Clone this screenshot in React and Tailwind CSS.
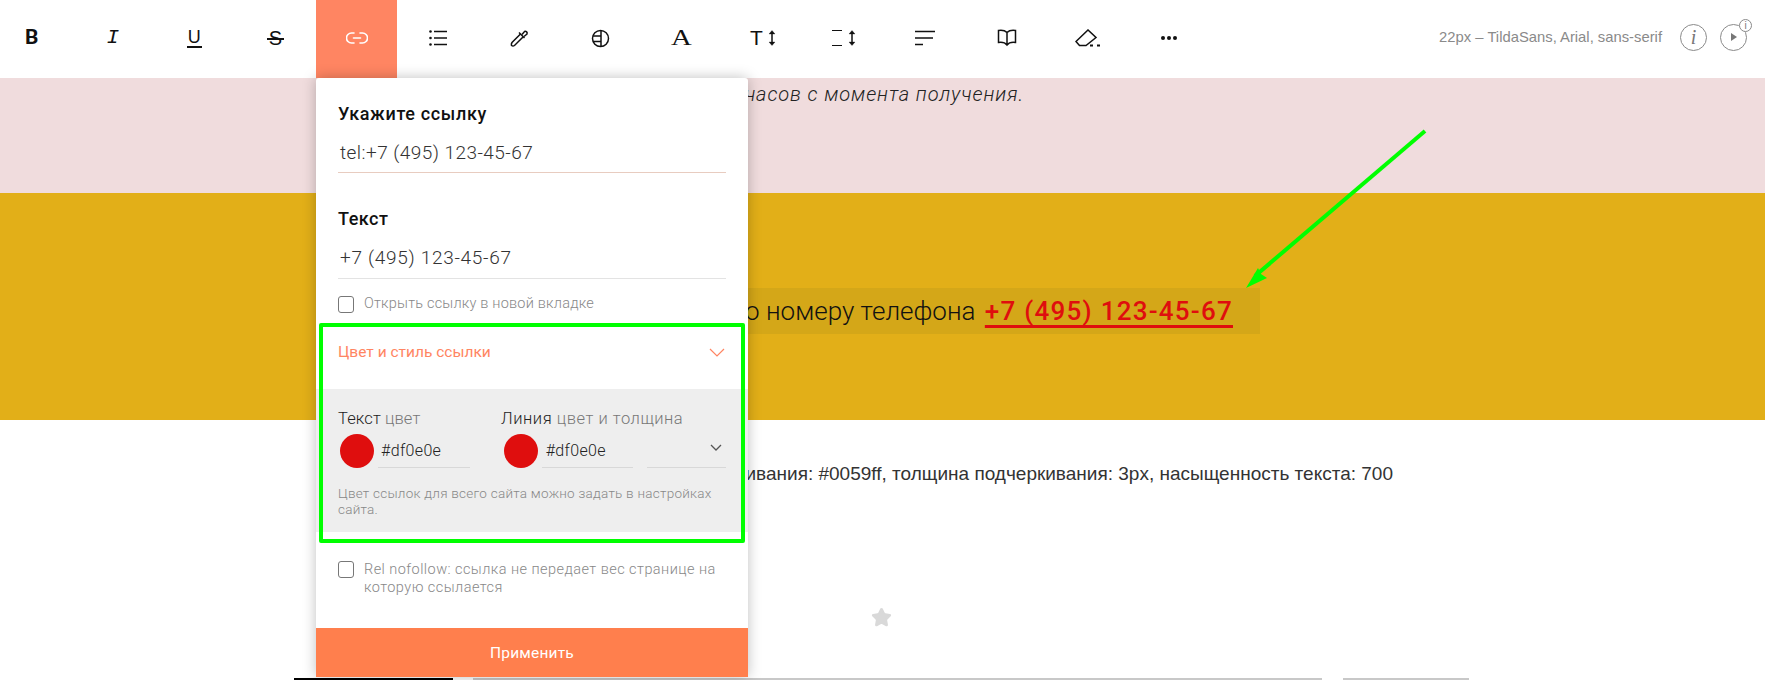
import { Star } from 'lucide-react';

const panelFont = "font-['Roboto','Noto_Sans',sans-serif]";

function LinkIcon() {
  return (
    <svg width="22" height="14" viewBox="0 0 22 14" fill="none" stroke="#fff" strokeWidth="1.6" strokeLinecap="round">
      <path d="M8 2H5.500a5 5 0 0 0 0 10H8" />
      <path d="M14 2h2.500a5 5 0 0 1 0 10H14" />
      <path d="M7.500 7h7" />
    </svg>
  );
}

function ListIcon() {
  return (
    <svg width="18" height="16" viewBox="0 0 18 16" fill="none" stroke="#111" strokeWidth="1.500">
      <path d="M5 1.500h13M5 8h13M5 14.500h13" />
      <g fill="#111" stroke="none">
        <circle cx="1.500" cy="1.500" r="1.300" />
        <circle cx="1.500" cy="8" r="1.300" />
        <circle cx="1.500" cy="14.500" r="1.300" />
      </g>
    </svg>
  );
}

function DropperIcon() {
  return (
    <svg width="19" height="19" viewBox="0 0 19 19" fill="none" stroke="#111" strokeWidth="1.500">
      <path d="M10.500 5 2 13.500Q1 15 1.500 16.500 3 17.500 4.500 16.500L13 8" />
      <path d="M9 3.500 14.500 9" />
      <path d="M12 5.500 14.500 2.500a1.900 1.900 0 0 1 2.500 2.500L14 7.500" />
    </svg>
  );
}

function GlobeIcon() {
  return (
    <svg width="19" height="19" viewBox="0 0 19 19" fill="none" stroke="#111" strokeWidth="1.500">
      <circle cx="9.500" cy="9.500" r="8" />
      <path d="M10 1.500v16M2 7h8M2 12.500h8" />
    </svg>
  );
}

function ArrowV({ h = 16 }) {
  return (
    <svg width="8" height={h} viewBox={`0 0 8 ${h}`} fill="#111" stroke="#111">
      <path d={`M4 2v${h - 4}`} strokeWidth="1.500" />
      <path d="M1 4 4 .5 7 4Z" strokeWidth="0.300" />
      <path d={`M1 ${h - 4} 4 ${h - 0.5} 7 ${h - 4}Z`} strokeWidth="0.300" />
    </svg>
  );
}

function LinesIcon() {
  return (
    <svg width="20" height="16" viewBox="0 0 20 16" fill="none" stroke="#111" strokeWidth="1.500">
      <path d="M0 1.500h20M0 8h18M0 14.500h8" />
    </svg>
  );
}

function BookIcon() {
  return (
    <svg width="20" height="18" viewBox="0 0 20 18" fill="none" stroke="#111" strokeWidth="1.500">
      <path d="M10 3.500C8 1.500 5 1 1.500 1.500v12c3.500-.5 6.500 0 8.500 2.500 2-2.500 5-3 8.500-2.500v-12C15 1 12 1.500 10 3.500Zm0 0V16" />
    </svg>
  );
}

function EraserIcon() {
  return (
    <svg width="26" height="18" viewBox="0 0 26 18" fill="none" stroke="#111" strokeWidth="1.500">
      <path d="M1 12.500 13 1l8 7.500L11 16.500H4.500Z" />
      <path d="M15 16.500h3M22 16.500h3" strokeWidth="1.800" />
    </svg>
  );
}

function ToolCell({ active, children }) {
  return (
    <div className={`w-[81.25px] h-[78px] pb-[2px] flex items-center justify-center shrink-0 ${active ? 'bg-[#ff8562]' : ''}`}>
      {children}
    </div>
  );
}

function Toolbar() {
  return (
    <div className="h-[78px] bg-white flex items-center">
      <div className="flex -ml-[9px]">
        <ToolCell><span className="font-['Roboto'] font-bold text-[21px] text-[#111]">B</span></ToolCell>
        <ToolCell><span className="font-['Liberation_Mono'] italic text-[21px] text-[#111]">I</span></ToolCell>
        <ToolCell><span className="font-['Liberation_Sans'] text-[18px] leading-[17px] border-b-2 border-[#111] text-[#111] px-[1px]">U</span></ToolCell>
        <ToolCell>
          <span className="relative font-['Liberation_Sans'] text-[20px] leading-[20px] text-[#111]">
            S
            <span className="absolute -left-[2px] -right-[2px] top-[10px] h-[1.5px] bg-[#111]" />
          </span>
        </ToolCell>
        <ToolCell active><LinkIcon /></ToolCell>
        <ToolCell><ListIcon /></ToolCell>
        <ToolCell><DropperIcon /></ToolCell>
        <ToolCell><GlobeIcon /></ToolCell>
        <ToolCell><span className="font-['Liberation_Serif'] text-[23px] scale-x-125 text-[#111]">A</span></ToolCell>
        <ToolCell>
          <span className="font-['Liberation_Sans'] text-[21px] text-[#111] mr-[5px]">T</span>
          <ArrowV />
        </ToolCell>
        <ToolCell>
          <span className="w-[10px] h-[16px] border-y-[1.5px] border-[#111] mr-[6px]" />
          <ArrowV />
        </ToolCell>
        <ToolCell><LinesIcon /></ToolCell>
        <ToolCell><BookIcon /></ToolCell>
        <ToolCell><EraserIcon /></ToolCell>
        <ToolCell>
          <span className="flex gap-[1.5px]">
            <span className="w-[4.500px] h-[4.500px] rounded-full bg-[#111]" />
            <span className="w-[4.500px] h-[4.500px] rounded-full bg-[#111]" />
            <span className="w-[4.500px] h-[4.500px] rounded-full bg-[#111]" />
          </span>
        </ToolCell>
      </div>
      <div className="ml-auto mr-[18px] pb-[4px] flex items-center">
        <span className="font-['Liberation_Sans'] text-[14.800px] text-[#8a8a8a] mr-[18px]">22px – TildaSans, Arial, sans-serif</span>
        <span className="w-[27px] h-[27px] rounded-full border-[1.5px] border-[#8a8a8a] flex items-center justify-center font-['Liberation_Serif'] italic text-[20px] text-[#777]">i</span>
        <span className="relative ml-[13px] w-[27px] h-[27px] rounded-full border-[1.5px] border-[#8a8a8a] flex items-center justify-center">
          <span className="w-0 h-0 border-y-[4px] border-y-transparent border-l-[6px] border-l-[#777] ml-[1px]" />
          <span className="absolute -top-[6px] -right-[6px] w-[13px] h-[13px] rounded-full border border-[#8a8a8a] bg-white flex items-center justify-center font-['Liberation_Sans'] text-[10px] text-[#777]">i</span>
        </span>
      </div>
    </div>
  );
}

function Checkbox() {
  return <span className="w-[16px] h-[17px] shrink-0 rounded-[3px] border-[1.5px] border-[#777] bg-white" />;
}

function LinkPanel() {
  return (
    <div className={`absolute left-[316px] top-[78px] w-[432px] h-[599px] z-10 bg-white rounded-t-[3px] shadow-[0_0_14px_rgba(0,0,0,0.25)] flex flex-col ${panelFont}`}>
      <div className="px-[22px]">
        <div className="mt-[25px] text-[18px] leading-[22px] font-medium tracking-[0.65px] text-[#111]">Укажите ссылку</div>
        <div className="mt-[16px] pl-[2px] h-[32px] text-[19px] leading-[24px] font-light tracking-[0.45px] text-[#333] border-b border-[#e8ccc0]">tel:+7 (495) 123-45-67</div>
        <div className="mt-[35px] text-[18px] leading-[22px] font-medium tracking-[0.5px] text-[#111]">Текст</div>
        <div className="mt-[16px] pl-[2px] h-[33px] text-[19px] leading-[24px] font-light tracking-[0.7px] text-[#333] border-b border-[#e3e3e3]">+7 (495) 123-45-67</div>
        <label className="mt-[16px] flex items-center gap-[10px] text-[14.500px] leading-[18px] font-light tracking-[0.2px] text-[#888]">
          <Checkbox />
          Открыть ссылку в новой вкладке
        </label>
      </div>
      <div className="mt-[30px] px-[22px] flex items-center justify-between h-[20px]">
        <span className="text-[15.500px] text-[#ff8562]">Цвет и стиль ссылки</span>
        <svg width="16" height="10" viewBox="0 0 16 10" fill="none" stroke="#ff8562" strokeWidth="1.200" className="mr-[1px]">
          <path d="M1 1l7 7 7-7" />
        </svg>
      </div>
      <div className="mt-[26px] h-[143px] bg-[#eee] px-[22px] pt-[19px]">
        <div className="flex text-[16.500px] leading-[22px] font-light">
          <span className="w-[163px] tracking-[0.1px]"><span className="text-[#222]">Текст</span> <span className="text-[#777]">цвет</span></span>
          <span className="tracking-[0.55px]"><span className="text-[#222]">Линия</span> <span className="text-[#777]">цвет и толщина</span></span>
        </div>
        <div className="flex items-start mt-[3px] h-[45px]">
          <span className="ml-[2px] mt-[1px] w-[34px] h-[34px] rounded-full bg-[#df0e0e] shrink-0" />
          <span className="ml-[4px] w-[92px] h-[35px] border-b border-[#d8d8d8] pl-[3px] text-[16px] leading-[36px] font-light tracking-[0.35px] text-[#222]">#df0e0e</span>
          <span className="ml-[34px] mt-[1px] w-[34px] h-[34px] rounded-full bg-[#df0e0e] shrink-0" />
          <span className="ml-[4px] w-[92px] h-[35px] border-b border-[#d8d8d8] pl-[4px] text-[16px] leading-[36px] font-light tracking-[0.35px] text-[#222]">#df0e0e</span>
          <span className="ml-[14px] w-[79px] h-[35px] border-b border-[#d8d8d8] flex justify-end pt-[11px] pr-[4px]">
            <svg width="12" height="8" viewBox="0 0 12 8" fill="none" stroke="#555" strokeWidth="1.300">
              <path d="M1 1l5 5 5-5" />
            </svg>
          </span>
        </div>
        <p className="mt-[7px] text-[13.500px] leading-[16px] font-light text-[#888] tracking-[0.25px]">Цвет ссылок для всего сайта можно задать в настройках сайта.</p>
      </div>
      <label className="mt-[29px] px-[22px] flex items-start gap-[10px] text-[14.500px] leading-[18px] font-light tracking-[0.45px] text-[#888]">
        <Checkbox />
        <span>Rel nofollow: ссылка не передает вес странице на которую ссылается</span>
      </label>
      <button className="mt-auto h-[49px] pt-[2px] bg-[#ff7f4d] text-white text-[15.500px] tracking-[0.2px]">Применить</button>
    </div>
  );
}

function Annotations() {
  return (
    <>
      <div className="absolute left-[319px] top-[323px] w-[426px] h-[220px] z-20 border-4 border-[#00ff00] rounded-[2px]" />
      <svg className="absolute left-[1240px] top-[125px] z-20" width="190" height="170" viewBox="1240 125 190 170">
        <path d="M1425 131 1255 276" stroke="#00ff00" strokeWidth="4" fill="none" />
        <path d="M1246 288 1258 268 1261 274 1267 278Z" fill="#00ff00" />
      </svg>
    </>
  );
}

export default function App() {
  return (
    <div className="relative w-[1765px] h-[680px] overflow-hidden bg-white">
      <Toolbar />
      <div className="h-[115px] bg-[#f0dcdd] flex justify-end pr-[741px] pt-[4px]">
        <span className={`text-[20px] leading-[24px] italic font-light tracking-[0.9px] text-[#222] whitespace-nowrap ${panelFont}`}>24 часов с момента получения.</span>
      </div>
      <div className="h-[227px] bg-[#e2af18] flex justify-end items-start pr-[505px] pt-[95px]">
        <div className={`h-[46px] bg-[#d4a718] pl-[60px] pr-[27px] text-[26px] leading-[46px] font-light text-[#111] whitespace-nowrap ${panelFont}`}>
          по номеру телефона{' '}
          <span className="ml-[3px] font-medium tracking-[1.25px] text-[#df0e0e] underline decoration-[3px] underline-offset-[5px] decoration-[#df0e0e] [text-decoration-skip-ink:none]">+7 (495) 123-45-67</span>
        </div>
      </div>
      <div className="h-[260px] flex flex-col">
        <div className="flex justify-end pr-[372px] pt-[42px]">
          <span className="font-['Liberation_Sans'] text-[19px] leading-[24px] text-[#333] whitespace-nowrap">подчеркивания: #0059ff, толщина подчеркивания: 3px, насыщенность текста: 700</span>
        </div>
        <div className="pl-[871px] mt-[121px]">
          <Star size={21} fill="#d9d9d9" stroke="#d9d9d9" />
        </div>
        <div className="mt-auto flex h-[2px]">
          <span className="ml-[294px] w-[159px] bg-black" />
          <span className="ml-[20px] w-[849px] bg-[#c8c8c8]" />
          <span className="ml-[21px] w-[126px] bg-[#c8c8c8]" />
        </div>
      </div>
      <LinkPanel />
      <Annotations />
    </div>
  );
}
